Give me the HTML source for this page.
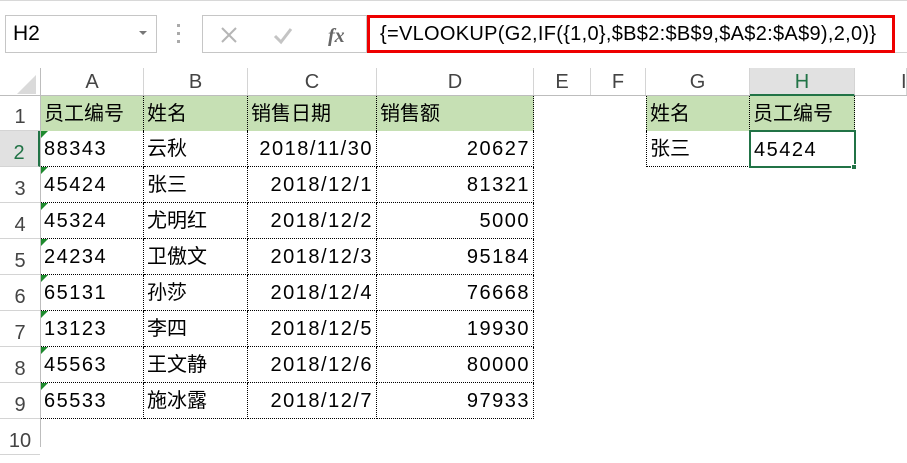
<!DOCTYPE html>
<html><head><meta charset="utf-8"><style>
*{margin:0;padding:0}
body{width:907px;height:447px;overflow:hidden;background:#fff;position:relative;font-family:"Liberation Sans","Noto Sans CJK SC",sans-serif;color:#000}
.a{position:absolute;box-sizing:border-box}
.c{position:absolute;box-sizing:border-box;height:36px;line-height:36px;font-size:20px;padding:0 3px;white-space:nowrap;overflow:hidden}
.n{letter-spacing:1.5px}
.d{border-right:1px dotted #000;border-bottom:1px dotted #000}
.g{background:#c6e0b4;border-right:1px dotted #000}
.r{text-align:right;padding-right:3px}
.tri{position:absolute;left:0;top:0;width:0;height:0;border-top:7px solid #1e8a2e;border-right:7px solid transparent}
.ch{position:absolute;top:68px;height:27px;line-height:28px;font-size:20px;text-align:center;color:#444;border-right:1px solid #d4d4d4;box-sizing:border-box}
.rh{position:absolute;left:0;width:40px;height:36px;line-height:44px;font-size:20px;text-align:center;color:#444;border-bottom:1px solid #d4d4d4;box-sizing:border-box}
</style></head><body>
<div class="a" style="left:0;top:0;width:907px;height:1px;background:#d8d8d8"></div>
<div class="a" style="left:5px;top:15px;width:152px;height:38px;border:1px solid #c6c6c6;font-size:21px;line-height:36px;padding-left:7px">H2</div>
<div class="a" style="left:139px;top:31px;width:0;height:0;border-left:4px solid transparent;border-right:4px solid transparent;border-top:4px solid #777"></div>
<div class="a" style="left:177px;top:24px;width:3px;height:3px;background:#aaa"></div>
<div class="a" style="left:177px;top:32px;width:3px;height:3px;background:#aaa"></div>
<div class="a" style="left:177px;top:40px;width:3px;height:3px;background:#aaa"></div>
<div class="a" style="left:202px;top:15px;width:165px;height:38px;border:1px solid #c6c6c6"></div>
<svg class="a" style="left:218px;top:24px" width="150" height="22"><path d="M4 4L18 18M18 4L4 18" stroke="#b5b5b5" stroke-width="2"/><path d="M57 12L63 18L73 5" stroke="#c4c4c4" stroke-width="3" fill="none"/><text x="110" y="18" font-family="Liberation Serif" font-style="italic" font-weight="bold" font-size="20" fill="#666">fx</text></svg>
<div class="a" style="left:367px;top:15px;width:528px;height:38px;border:3px solid #e00"></div>
<div class="a" style="left:380px;top:15px;height:38px;line-height:38px;font-size:20px;letter-spacing:0.3px">{=VLOOKUP(G2,IF({1,0},$B$2:$B$9,$A$2:$A$9),2,0)}</div>
<div class="a" style="left:895px;top:52px;width:12px;height:1px;background:#d4d4d4"></div>
<div class="a" style="left:0;top:68px;width:907px;height:28px;border-bottom:1px solid #bdbdbd;box-sizing:border-box"></div>
<div class="a" style="left:17px;top:75px;width:0;height:0;border-left:19px solid transparent;border-bottom:19px solid #dadada"></div>
<div class="a" style="left:40px;top:68px;width:1px;height:379px;background:#bdbdbd"></div>
<div class="ch" style="left:41px;width:103px">A</div>
<div class="ch" style="left:144px;width:104px">B</div>
<div class="ch" style="left:248px;width:129px">C</div>
<div class="ch" style="left:377px;width:157px">D</div>
<div class="ch" style="left:534px;width:57px">E</div>
<div class="ch" style="left:591px;width:55px">F</div>
<div class="ch" style="left:646px;width:104px">G</div>
<div class="ch" style="left:750px;width:105px;background:#e1e1e1;color:#217346;border-bottom:2px solid #217346;height:28px">H</div>
<div class="ch" style="left:855px;width:52px;text-align:left;padding-left:46px">I</div>
<div class="rh" style="top:95px">1</div>
<div class="rh" style="top:131px;background:#e1e1e1;color:#217346;border-right:2px solid #217346">2</div>
<div class="rh" style="top:167px">3</div>
<div class="rh" style="top:203px">4</div>
<div class="rh" style="top:239px">5</div>
<div class="rh" style="top:275px">6</div>
<div class="rh" style="top:311px">7</div>
<div class="rh" style="top:347px">8</div>
<div class="rh" style="top:383px">9</div>
<div class="rh" style="top:419px">10</div>
<div class="c g" style="left:41px;top:96px;width:103px;height:35px">员工编号</div>
<div class="c g" style="left:144px;top:96px;width:104px;height:35px">姓名</div>
<div class="c g" style="left:248px;top:96px;width:129px;height:35px">销售日期</div>
<div class="c g" style="left:377px;top:96px;width:157px;height:35px">销售额</div>
<div class="c g" style="left:646px;top:96px;width:104px;height:35px;border-left:1px dotted #000">姓名</div>
<div class="c g" style="left:750px;top:96px;width:105px;height:35px">员工编号</div>
<div class="c d n" style="left:41px;top:131px;width:103px"><span class="tri"></span>88343</div><div class="c d" style="left:144px;top:131px;width:104px">云秋</div><div class="c d r n" style="left:248px;top:131px;width:129px">2018/11/30</div><div class="c d r n" style="left:377px;top:131px;width:157px">20627</div>
<div class="c d n" style="left:41px;top:167px;width:103px"><span class="tri"></span>45424</div><div class="c d" style="left:144px;top:167px;width:104px">张三</div><div class="c d r n" style="left:248px;top:167px;width:129px">2018/12/1</div><div class="c d r n" style="left:377px;top:167px;width:157px">81321</div>
<div class="c d n" style="left:41px;top:203px;width:103px"><span class="tri"></span>45324</div><div class="c d" style="left:144px;top:203px;width:104px">尤明红</div><div class="c d r n" style="left:248px;top:203px;width:129px">2018/12/2</div><div class="c d r n" style="left:377px;top:203px;width:157px">5000</div>
<div class="c d n" style="left:41px;top:239px;width:103px"><span class="tri"></span>24234</div><div class="c d" style="left:144px;top:239px;width:104px">卫傲文</div><div class="c d r n" style="left:248px;top:239px;width:129px">2018/12/3</div><div class="c d r n" style="left:377px;top:239px;width:157px">95184</div>
<div class="c d n" style="left:41px;top:275px;width:103px"><span class="tri"></span>65131</div><div class="c d" style="left:144px;top:275px;width:104px">孙莎</div><div class="c d r n" style="left:248px;top:275px;width:129px">2018/12/4</div><div class="c d r n" style="left:377px;top:275px;width:157px">76668</div>
<div class="c d n" style="left:41px;top:311px;width:103px"><span class="tri"></span>13123</div><div class="c d" style="left:144px;top:311px;width:104px">李四</div><div class="c d r n" style="left:248px;top:311px;width:129px">2018/12/5</div><div class="c d r n" style="left:377px;top:311px;width:157px">19930</div>
<div class="c d n" style="left:41px;top:347px;width:103px"><span class="tri"></span>45563</div><div class="c d" style="left:144px;top:347px;width:104px">王文静</div><div class="c d r n" style="left:248px;top:347px;width:129px">2018/12/6</div><div class="c d r n" style="left:377px;top:347px;width:157px">80000</div>
<div class="c d n" style="left:41px;top:383px;width:103px"><span class="tri"></span>65533</div><div class="c d" style="left:144px;top:383px;width:104px">施冰露</div><div class="c d r n" style="left:248px;top:383px;width:129px">2018/12/7</div><div class="c d r n" style="left:377px;top:383px;width:157px">97933</div>
<div class="c d" style="left:646px;top:131px;width:104px;border-left:1px dotted #000">张三</div>
<div class="c n" style="left:749px;top:130px;width:107px;height:38px;line-height:36px;border:2px solid #217346">45424</div>
<div class="a" style="left:851px;top:164px;width:6px;height:6px;background:#217346;border:1px solid #fff"></div>
</body></html>
